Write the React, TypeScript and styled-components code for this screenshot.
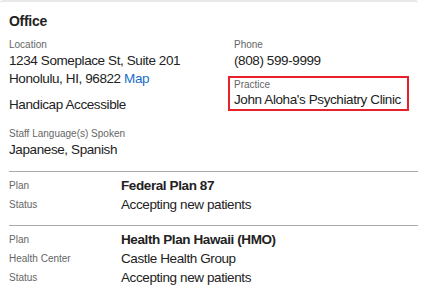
import { Fragment } from "react";
import { createGlobalStyle, styled } from "styled-components";

const GlobalStyle = createGlobalStyle`
  html, body {
    margin: 0;
    padding: 0;
    background: #fff;
  }
  body {
    font-family: "Liberation Sans", Arial, sans-serif;
    color: #222;
  }
`;

const Card = styled.div`
  width: 418px;
  border-top: 2px solid #e8e8e8;
  border-radius: 3px 3px 0 0;
  padding: 10px 0 0 9px;
  box-sizing: border-box;
`;

const Title = styled.h2`
  margin: 0 0 8px;
  font-size: 14px;
  font-weight: bold;
  line-height: 18px;
  letter-spacing: -0.3px;
  color: #222;
`;

const Columns = styled.div`
  display: grid;
  grid-template-columns: 225px 1fr;
  margin-bottom: 7px;
`;

const Column = styled.div`
  display: flex;
  flex-direction: column;
`;

const Field = styled.div<{ $gap?: number }>`
  display: flex;
  flex-direction: column;
  margin-bottom: ${({ $gap }) => $gap ?? 6}px;
`;

const HighlightField = styled(Field)`
  border: 2px solid #e8202a;
  margin-left: -6px;
  padding: 0 0 0 4px;
  width: 173px;
`;

const Label = styled.span<{ $tight?: boolean }>`
  font-size: 10px;
  line-height: ${({ $tight }) => ($tight ? "13px" : "14px")};
  color: #666;
`;

const Value = styled.span<{ $spaced?: boolean }>`
  font-size: 13.5px;
  line-height: 18px;
  letter-spacing: -0.4px;
  color: #222;
  margin-top: ${({ $spaced }) => ($spaced ? "2px" : "0")};
`;

const MapLink = styled.a`
  color: #1a6fc9;
  text-decoration: none;
`;

const Divider = styled.hr`
  border: 0;
  border-top: 1px solid #aaa;
  margin: 0;
`;

const PlanBlock = styled.div`
  display: grid;
  grid-template-columns: 112px 1fr;
  row-gap: 1px;
  padding: 5px 0 11px;
`;

const PlanLabel = styled.span`
  font-size: 10px;
  line-height: 18px;
  color: #666;
`;

const PlanValue = styled.span<{ $strong?: boolean }>`
  font-size: 13.5px;
  line-height: 18px;
  letter-spacing: -0.4px;
  color: #222;
  font-weight: ${({ $strong }) => ($strong ? "bold" : "normal")};
`;

type PlanRow = { label: string; value: string; strong?: boolean };

const plans: PlanRow[][] = [
  [
    { label: "Plan", value: "Federal Plan 87", strong: true },
    { label: "Status", value: "Accepting new patients" },
  ],
  [
    { label: "Plan", value: "Health Plan Hawaii (HMO)", strong: true },
    { label: "Health Center", value: "Castle Health Group" },
    { label: "Status", value: "Accepting new patients" },
  ],
];

export default function App() {
  return (
    <>
      <GlobalStyle />
      <Card>
        <Title>Office</Title>
        <Columns>
          <Column>
            <Field>
              <Label>Location</Label>
              <Value>1234 Someplace St, Suite 201</Value>
              <Value>
                Honolulu, HI, 96822 <MapLink href="#">Map</MapLink>
              </Value>
            </Field>
            <Field>
              <Value $spaced>Handicap Accessible</Value>
            </Field>
          </Column>
          <Column>
            <Field>
              <Label>Phone</Label>
              <Value>(808) 599-9999</Value>
            </Field>
            <HighlightField $gap={0}>
              <Label $tight>Practice</Label>
              <Value>John Aloha's Psychiatry Clinic</Value>
            </HighlightField>
          </Column>
        </Columns>
        <Field $gap={12}>
          <Label>Staff Language(s) Spoken</Label>
          <Value>Japanese, Spanish</Value>
        </Field>
        {plans.map((rows, i) => (
          <div key={i}>
            <Divider />
            <PlanBlock>
              {rows.map((r) => (
                <Fragment key={r.label}>
                  <PlanLabel>{r.label}</PlanLabel>
                  <PlanValue $strong={r.strong}>{r.value}</PlanValue>
                </Fragment>
              ))}
            </PlanBlock>
          </div>
        ))}
      </Card>
    </>
  );
}
